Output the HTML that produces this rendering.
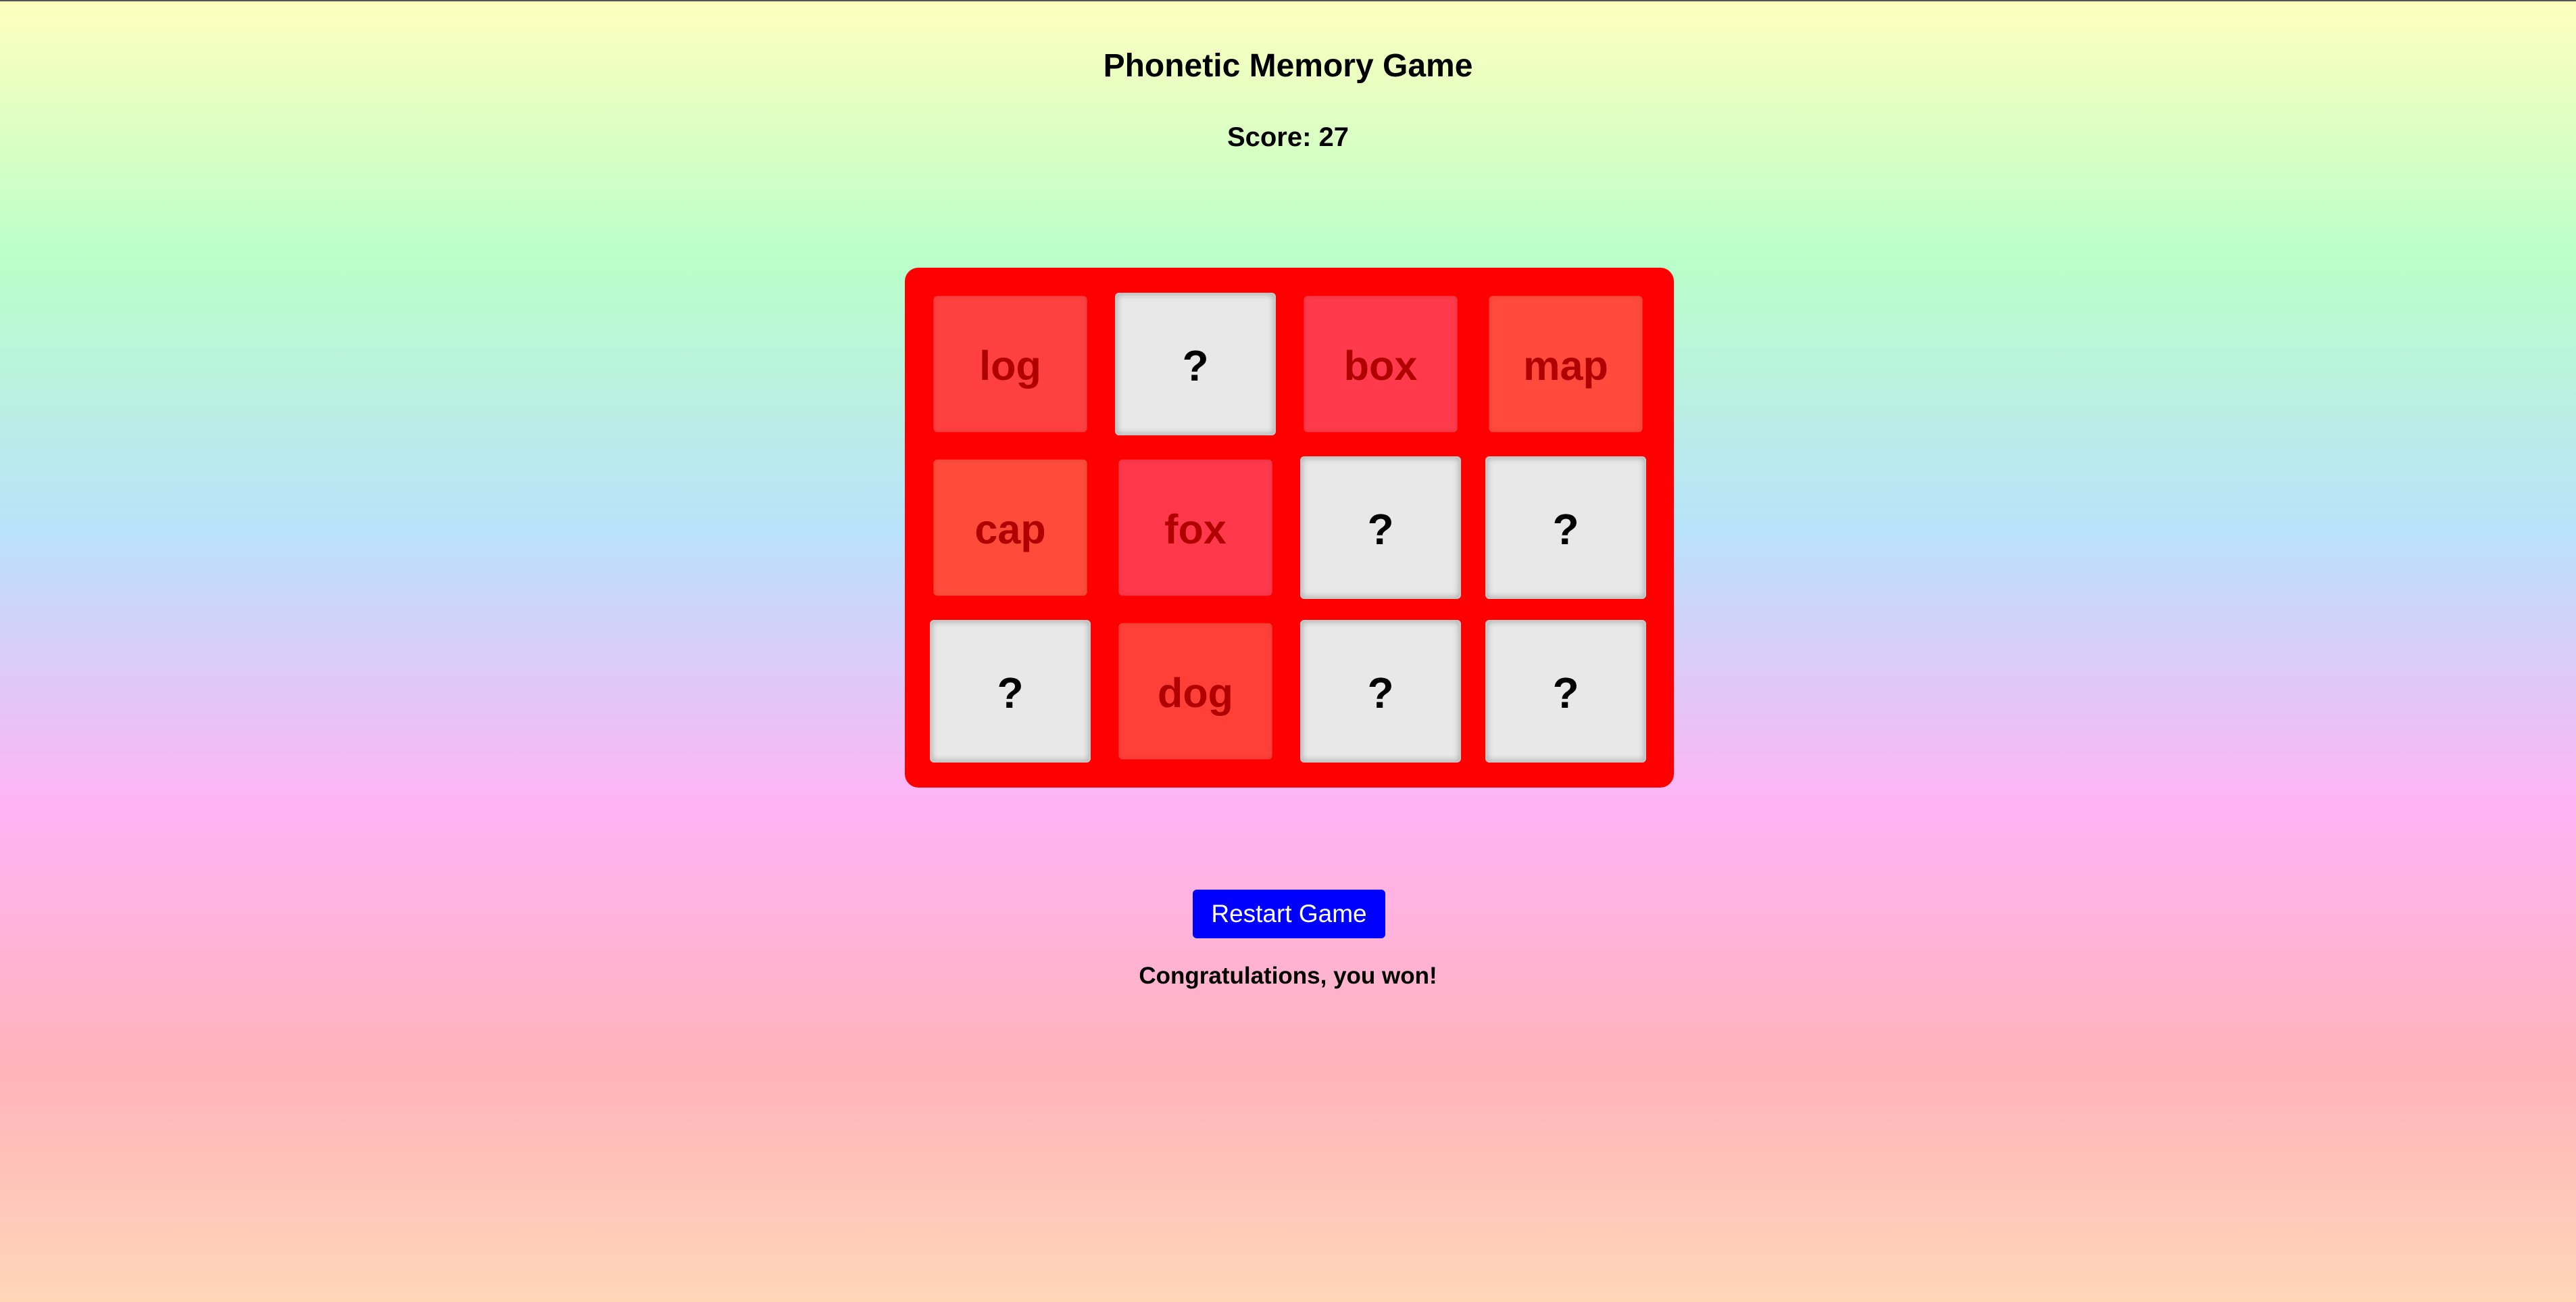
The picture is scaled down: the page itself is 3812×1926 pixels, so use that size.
<!DOCTYPE html>
<html><head><meta charset="utf-8"><style>
html,body{margin:0;padding:0}
body{width:3812px;height:1926px;position:relative;overflow:hidden;
background:linear-gradient(to bottom,#ffffbe 0%,#baffc9 20%,#bae1fb 41%,#ffb3f5 62%,#ffb3ba 82%,#ffd6b8 100%);
font-family:"Liberation Sans","DejaVu Sans",sans-serif;border-top:2px solid #555;box-sizing:border-box}
.t{position:absolute;left:0;width:100%;text-align:center;font-weight:bold;color:#000}
#board{position:absolute;left:1339px;top:394px;width:1138px;height:769px;background:#ff0000;border-radius:20px}
.c{position:absolute;width:238px;height:211px;border-radius:6px;display:flex;align-items:center;justify-content:center;font-weight:bold;font-size:64px;box-sizing:border-box;padding-top:4px}
.q{background:#e8e8e8;color:#000;border:2px solid #c8c8c8;box-shadow:inset 0 0 10px rgba(0,0,0,.3)}
.m{color:#b00000;transform:scale(.955);box-shadow:inset 0 0 8px rgba(0,0,0,.12)}
#btn{position:absolute;left:1765px;top:1314px;width:285px;height:72px;background:#0000ff;border-radius:6px;color:#fff;font-size:37px;display:flex;align-items:center;justify-content:center}
</style></head><body>
<div class="t" style="top:68px;font-size:48px">Phonetic Memory Game</div>
<div class="t" style="top:179px;font-size:40px">Score: 27</div>
<div id="board">
<div class="c m" style="left:37px;top:37px;background:#ff4040">log</div>
<div class="c q" style="left:311px;top:37px">?</div>
<div class="c m" style="left:585px;top:37px;background:#ff3a4c">box</div>
<div class="c m" style="left:859px;top:37px;background:#ff4a3c">map</div>
<div class="c m" style="left:37px;top:279px;background:#ff4c3a">cap</div>
<div class="c m" style="left:311px;top:279px;background:#ff384c">fox</div>
<div class="c q" style="left:585px;top:279px">?</div>
<div class="c q" style="left:859px;top:279px">?</div>
<div class="c q" style="left:37px;top:521px">?</div>
<div class="c m" style="left:311px;top:521px;background:#ff4038">dog</div>
<div class="c q" style="left:585px;top:521px">?</div>
<div class="c q" style="left:859px;top:521px">?</div>
</div>
<div id="btn">Restart Game</div>
<div class="t" style="top:1422px;font-size:35px">Congratulations, you won!</div>
</body></html>
